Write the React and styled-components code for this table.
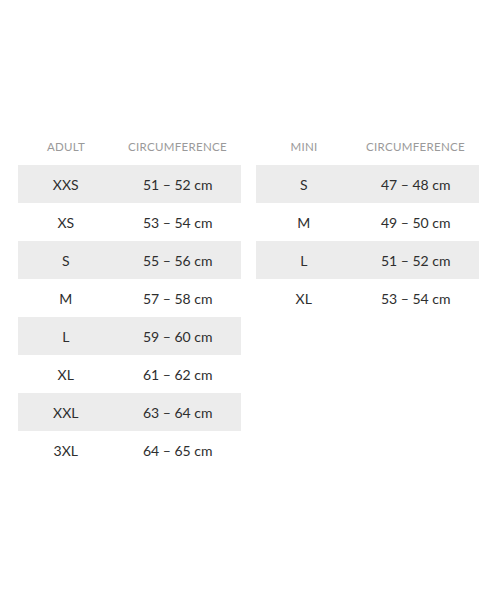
import React from "react";
import styled, { createGlobalStyle } from "styled-components";

const Global = createGlobalStyle`
  html, body { margin: 0; padding: 0; background: #fff; }
  body { font-family: Lato, "Open Sans", sans-serif; }
`;

const Page = styled.div`
  display: flex;
  align-items: flex-start;
  gap: 15px;
  padding: 127px 20px 0 18px;
  width: 500px;
  box-sizing: border-box;
`;

const Table = styled.table`
  width: 223px;
  border-collapse: collapse;
  table-layout: fixed;
`;

const Head = styled.th`
  height: 38px;
  padding: 0;
  font-weight: 400;
  font-size: 11.5px;
  letter-spacing: 0.3px;
  color: #9a9a9a;
  text-transform: uppercase;
  text-align: center;
  width: ${(p) => p.$w}px;
`;

const Row = styled.tr`
  background: ${(p) => (p.$shaded ? "#ececec" : "transparent")};
`;

const Cell = styled.td`
  height: 38px;
  padding: 0;
  font-size: 14px;
  color: #2e2e2e;
  text-align: center;
  & + & {
    border-left: 1px solid ${(p) => (p.$shaded ? "#f3f3f3" : "transparent")};
  }
`;

function SizeTable({ title, rows }) {
  return (
    <Table>
      <thead>
        <tr>
          <Head $w={96}>{title}</Head>
          <Head $w={127}>Circumference</Head>
        </tr>
      </thead>
      <tbody>
        {rows.map(([s, c], i) => (
          <Row key={s} $shaded={i % 2 === 0}>
            <Cell $shaded={i % 2 === 0}>{s}</Cell>
            <Cell $shaded={i % 2 === 0}>{c}</Cell>
          </Row>
        ))}
      </tbody>
    </Table>
  );
}

const adult = [
  ["XXS", "51 – 52 cm"],
  ["XS", "53 – 54 cm"],
  ["S", "55 – 56 cm"],
  ["M", "57 – 58 cm"],
  ["L", "59 – 60 cm"],
  ["XL", "61 – 62 cm"],
  ["XXL", "63 – 64 cm"],
  ["3XL", "64 – 65 cm"],
];

const mini = [
  ["S", "47 – 48 cm"],
  ["M", "49 – 50 cm"],
  ["L", "51 – 52 cm"],
  ["XL", "53 – 54 cm"],
];

export default function App() {
  return (
    <>
      <Global />
      <Page>
        <SizeTable title="Adult" rows={adult} />
        <SizeTable title="Mini" rows={mini} />
      </Page>
    </>
  );
}
